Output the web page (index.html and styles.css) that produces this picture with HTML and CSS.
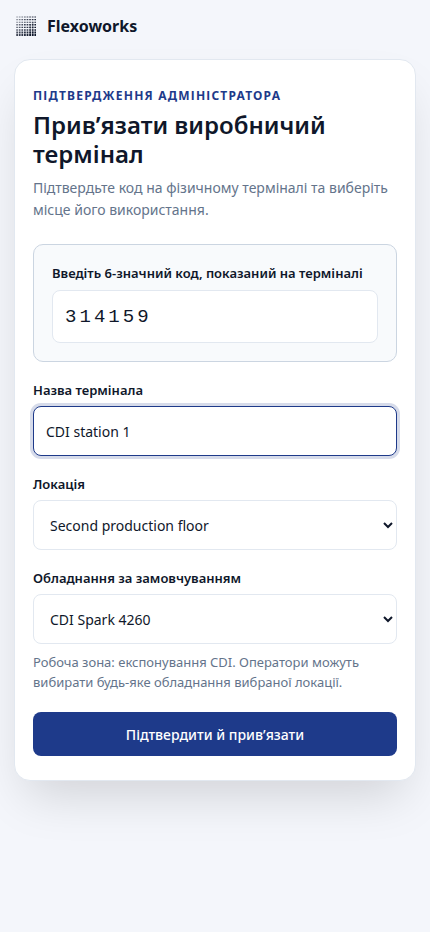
FILE: index.html
```html
<!DOCTYPE html>
<html lang="uk">
<head>
<meta charset="utf-8">
<meta name="viewport" content="width=device-width, initial-scale=1">
<title>Flexoworks</title>
<link rel="stylesheet" href="styles.css">
</head>
<body>
<header class="brand">
  <svg class="brand-mark" viewBox="0 0 20 20" aria-hidden="true">
    <defs>
      <linearGradient id="fade" x1="0" y1="0" x2="1" y2="0.6">
        <stop offset="0" stop-color="#fff" stop-opacity=".35"/>
        <stop offset=".5" stop-color="#fff" stop-opacity=".8"/>
        <stop offset="1" stop-color="#fff"/>
      </linearGradient>
      <mask id="tone"><rect width="20" height="20" fill="url(#fade)"/></mask>
    </defs>
    <g mask="url(#tone)" fill="none" stroke="#0f172a">
      <path stroke-width="1.1" stroke-dasharray="1.7 .9" d="M.2 1H20M.2 3.6H20M.2 6.2H20"/>
      <path stroke-width="1.4" stroke-dasharray="1.7 .9" d="M.2 8.8H20M.2 11.4H20M.2 14H20"/>
      <path stroke-width="1.8" stroke-dasharray="1.8 .8" d="M.2 16.5H20M.2 19H20"/>
      <path stroke-width="1" stroke-opacity=".5" d="M14.2 8V20M16.8 6V20"/>
    </g>
  </svg>
  <span class="brand-name">Flexoworks</span>
</header>
<main class="card">
  <p class="eyebrow">Підтвердження адміністратора</p>
  <h1 class="title">Прив’язати виробничий термінал</h1>
  <p class="intro">Підтвердьте код на фізичному терміналі та виберіть місце його використання.</p>
  <form class="form">
    <div class="code-panel field">
      <label for="code">Введіть 6-значний код, показаний на терміналі</label>
      <input class="control code" id="code" type="text" inputmode="numeric" maxlength="6" value="314159">
    </div>
    <div class="field">
      <label for="name">Назва термінала</label>
      <input class="control active" id="name" type="text" value="CDI station 1">
    </div>
    <div class="field">
      <label for="location">Локація</label>
      <select class="control" id="location"><option>Second production floor</option></select>
    </div>
    <div class="field">
      <label for="equipment">Обладнання за замовчуванням</label>
      <select class="control" id="equipment"><option>CDI Spark 4260</option></select>
      <p class="hint">Робоча зона: експонування CDI. Оператори можуть вибирати будь-яке обладнання вибраної локації.</p>
    </div>
    <button class="submit" type="submit">Підтвердити й прив’язати</button>
  </form>
</main>
</body>
</html>
```

FILE: styles.css
```css
* {
  box-sizing: border-box;
}

body {
  margin: 0;
  min-height: 100vh;
  padding: 14px;
  background: #f4f6fb;
  color: #0f172a;
  font-family: "Noto Sans", sans-serif;
  font-size: 14px;
}

.brand {
  display: flex;
  align-items: center;
  gap: 11px;
  height: 24px;
  margin: 0 2px 21px;
}

.brand-mark {
  width: 20px;
  height: 20px;
}

.brand-name {
  font-size: 16px;
  font-weight: 700;
}

.card {
  max-width: 560px;
  margin: 0 auto;
  padding: 28px 18px 24px;
  background: #fff;
  border: 1px solid #e2e8f0;
  border-radius: 16px;
  box-shadow: 0 25px 50px -12px rgba(0, 0, 0, 0.15);
}

.eyebrow {
  margin: 0 0 6px;
  color: #1e3a8a;
  font-size: 12px;
  font-weight: 700;
  line-height: 16px;
  letter-spacing: 0.1em;
  text-transform: uppercase;
}

.title {
  margin: 0 0 9px;
  font-size: 24px;
  font-weight: 600;
  line-height: 29px;
}

.intro {
  margin: 0;
  color: #64748b;
  line-height: 22px;
}

.form {
  display: grid;
  gap: 19px;
  margin-top: 23px;
}

.field {
  display: grid;
  gap: 7px;
}

.field label {
  font-size: 13px;
  font-weight: 600;
  line-height: 18px;
}

.code-panel {
  gap: 8px;
  padding: 19px 18px 18px;
  background: #f8fafc;
  border: 1px solid #cbd5e1;
  border-radius: 10px;
}

.control {
  width: 100%;
  height: 50px;
  padding: 0 12px;
  background: #fff;
  border: 1px solid #e2e8f0;
  border-radius: 8px;
  color: #0f172a;
  font: inherit;
}

.code {
  height: 53px;
  font-family: "Liberation Mono", monospace;
  font-size: 19px;
  letter-spacing: 0.16em;
}

.active {
  border-color: #1e3a8a;
  outline: none;
  box-shadow: 0 0 0 3px rgba(30, 58, 138, 0.18);
}

.hint {
  margin: 1px 0;
  color: #64748b;
  font-size: 13px;
  line-height: 20px;
}

.submit {
  height: 44px;
  padding: 0 16px;
  background: #1e3a8a;
  border: 0;
  border-radius: 8px;
  color: #fff;
  font: inherit;
  font-weight: 500;
}
```
